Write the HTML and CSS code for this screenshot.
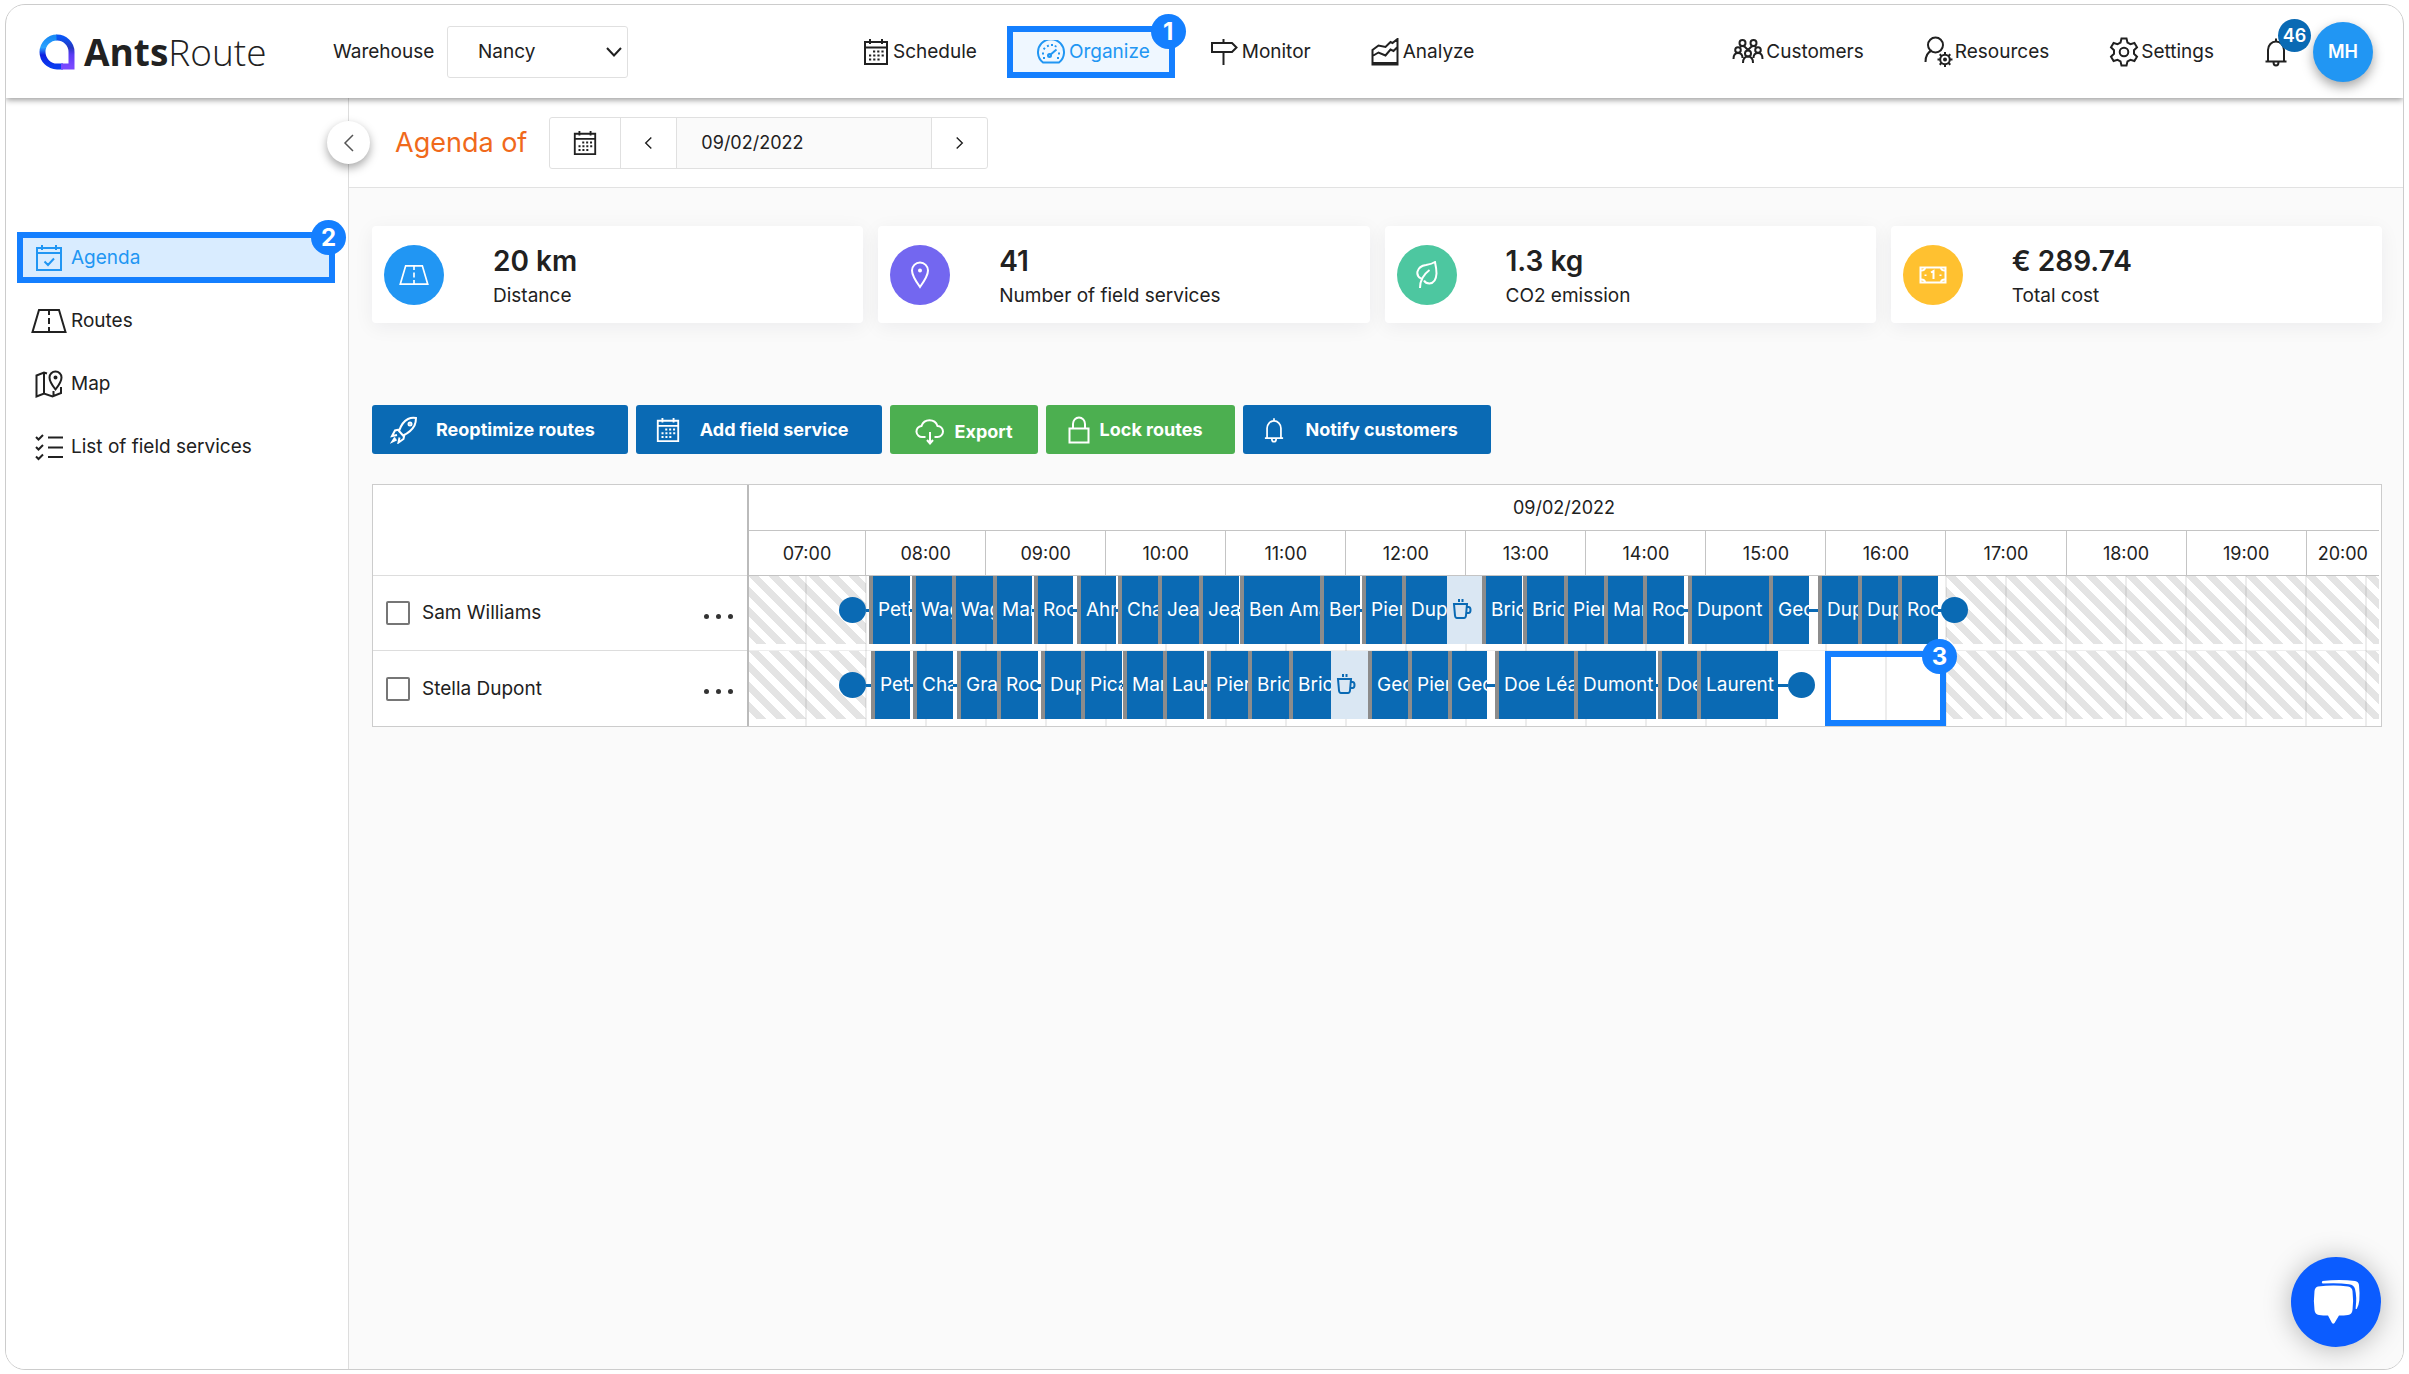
FILE: index.html
```
<!DOCTYPE html>
<html lang="en">
<head>
  <meta charset="UTF-8" />
  <title>AntsRoute - Agenda</title>
  <meta name="viewport" content="width=device-width, initial-scale=1.0" />
  <link rel="stylesheet" href="styles.css">
</head>
<body>
  <!-- Shared icons -->
  <svg class="sprite" aria-hidden="true">
    <symbol id="i-calendar" viewBox="0 0 26 28">
      <path d="M2 4h22v22H2zM2 9.500h22M7 1v5M19 1v5" />
      <path d="M10 13.500h12M6 17.500h16M6 21.500h12" stroke-dasharray="2.200 2" stroke-width="2.200" />
    </symbol>
    <symbol id="i-road" viewBox="0 0 36 26">
      <path d="M8 2h20l6.500 22h-33zM18 2v5M18 10v6M18 19v5" />
    </symbol>
    <symbol id="i-bell" viewBox="0 0 24 30">
      <path d="M1.500 24.500h21M4 24.500V13a8 8.500 0 0 1 16 0v11.500M12 4.500V1.500M9.500 25a2.500 3.500 0 0 0 5 0" />
    </symbol>
    <symbol id="i-left" viewBox="0 0 12 20"><path d="M10 2L2 10l8 8" /></symbol>
    <symbol id="i-right" viewBox="0 0 12 20"><path d="M2 2l8 8-8 8" /></symbol>
    <symbol id="i-cup" viewBox="0 0 20 22">
      <path d="M2 6h13l-1 11.500q-.3 2.500-2 2.500H5q-1.700 0-2-2.500zM15 9h1.500q2 0 2 3t-2 3H14.500M7 1v3M10.500 1v3" />
    </symbol>
  </svg>

  <div class="app">
    <header class="topbar">
      <a class="logo" href="#">
        <svg width="36" height="36" viewBox="0 0 36 36">
          <defs>
            <linearGradient id="lg-left" x1="0" y1="0" x2="0" y2="1">
              <stop offset="0" stop-color="#1a8cf5" /><stop offset=".35" stop-color="#2ba3ff" /><stop offset=".6" stop-color="#0d1fe0" /><stop offset="1" stop-color="#0a3cf0" />
            </linearGradient>
            <linearGradient id="lg-right" x1="0" y1="0" x2="0" y2="1">
              <stop offset="0" stop-color="#0b55f5" /><stop offset=".35" stop-color="#2436c0" /><stop offset=".6" stop-color="#5b3cf5" /><stop offset="1" stop-color="#7a48ff" />
            </linearGradient>
          </defs>
          <path d="M18 3.500A14.500 14.500 0 0 0 18 32.500H24" fill="none" stroke="url(#lg-left)" stroke-width="6" />
          <path d="M17.500 3.500A14.500 14.500 0 0 1 32.500 18V32.500H22" fill="none" stroke="url(#lg-right)" stroke-width="6" />
        </svg>
        <span class="logo-text"><b>Ants</b>Route</span>
      </a>

      <label class="warehouse-label" for="warehouse">Warehouse</label>
      <div class="select-wrap">
        <select id="warehouse"><option>Nancy</option></select>
        <svg class="icon" width="16" height="10" viewBox="0 0 16 10"><path d="M1 1l7 7.500L15 1" /></svg>
      </div>

      <nav class="main-nav">
        <a href="#"><svg class="icon" width="26" height="28"><use href="#i-calendar" /></svg>Schedule</a>
        <a href="#" class="active">
          <svg class="icon" width="28" height="24" viewBox="0 0 28 24">
            <path d="M6 22.500a13 13 0 1 1 16 0zM12.500 15.500l7-6" />
            <circle cx="12.500" cy="15.500" r="1.500" />
            <path d="M5 13.500h2M6.500 8l1.500 1.300M10.500 5l.8 1.800M15 4v2M19 5.500l-.8 1.500M21 13.500h2M6 18h2M20 18h2" />
          </svg>Organize
          <span class="step">1</span>
        </a>
        <a href="#">
          <svg class="icon" width="28" height="26" viewBox="0 0 28 26"><path d="M2 4h20l4.500 4.500L22 13H2zM13.500 0v4M13.500 13v13" /></svg>Monitor
        </a>
        <a href="#">
          <svg class="icon" width="28" height="28" viewBox="0 0 28 28"><path d="M1.500 26.500V12l6-4.500 7 1.500 5-5 2 1L26.500 1v25.500zM1.500 18l6-3.500 7 3 5-6 3 1.500 4-4M1 25h26" /></svg>Analyze
        </a>
      </nav>

      <nav class="user-nav">
        <a href="#">
          <svg class="icon" width="32" height="26" viewBox="0 0 32 26">
            <circle cx="10.500" cy="4" r="3" /><circle cx="21.500" cy="4" r="3" />
            <circle cx="6" cy="11" r="2.800" /><circle cx="26" cy="11" r="2.800" /><circle cx="16" cy="14.500" r="3" />
            <path d="M1.500 20q0-6 4.500-6t4.500 5M30.500 20q0-6-4.500-6t-4.500 5M11 24q0-6.500 5-6.500t5 6.500M8 8q2.500-2 5 0l3 3 3-3q2.500-2 5 0" />
          </svg>Customers
        </a>
        <a href="#">
          <svg class="icon" width="29" height="32" viewBox="0 0 29 32">
            <circle cx="11.500" cy="9" r="7.500" />
            <path d="M1.500 26q0-9 6.500-11.500" />
            <circle cx="21" cy="23.500" r="4.800" /><circle cx="21" cy="23.500" r="1" />
            <path d="M21 16v2.500M21 28.500V31M13.500 23.500H16M26 23.500h2.500M15.700 18.200l1.800 1.800M24.500 27l1.800 1.800M26.300 18.200L24.500 20M17.500 27l-1.800 1.800" />
          </svg>Resources
        </a>
        <a href="#">
          <svg class="icon" width="30" height="30" viewBox="0 0 30 30">
            <circle cx="15" cy="15" r="4.300" />
            <path d="M12.500 1.500h5l1 4 3 1.700 3.900-1.200 2.600 4.300-3 2.900v3.600l3 2.900-2.600 4.300-3.900-1.200-3 1.700-1 4h-5l-1-4-3-1.700L4.600 24 2 19.700l3-2.900v-3.600l-3-2.900L4.600 6l3.900 1.200 3-1.700z" />
          </svg>Settings
        </a>
        <button class="bell" aria-label="Notifications">
          <svg class="icon" width="24" height="30"><use href="#i-bell" /></svg>
          <span class="count">46</span>
        </button>
        <button class="avatar">MH</button>
      </nav>
    </header>

    <div class="layout">
      <aside class="sidebar">
        <button class="collapse" aria-label="Collapse menu"><svg class="icon thin" width="12" height="20"><use href="#i-left" /></svg></button>
        <a href="#" class="side-link active">
          <svg class="icon" width="36" height="28" viewBox="0 0 36 28"><path d="M6 4h24v22H6zM6 9h24M11 1v5M25 1v5M13.500 17.500l3.500 3.500 6-6.500" /></svg>Agenda
          <span class="step">2</span>
        </a>
        <a href="#" class="side-link"><svg class="icon" width="36" height="26"><use href="#i-road" /></svg>Routes</a>
        <a href="#" class="side-link">
          <svg class="icon" width="36" height="28" viewBox="0 0 36 28">
            <path d="M16 3.500L13 2.500 5.500 5.500V26.500L13 23.500l8.500 3 8.500-3.500V17M13 2.500v21M22.500 21v5" />
            <path d="M24.500 19.500Q18.500 12 18.500 7.500a6 6 0 0 1 12 0q0 4.500-6 12z" /><circle cx="24.500" cy="7.500" r="1" />
          </svg>Map
        </a>
        <a href="#" class="side-link">
          <svg class="icon" width="36" height="28" viewBox="0 0 36 28"><path d="M17 4.500h15M17 14.500h15M17 24h15M5 4l2.500 2.500L12 2M5 14l2.500 2.500L12 12M5 23.500L7.500 26 12 21.500" /></svg>List of field services
        </a>
      </aside>

      <main class="content">
        <div class="page-head">
          <h1>Agenda of</h1>
          <div class="date-picker">
            <button class="cal" aria-label="Open calendar"><svg class="icon" width="26" height="26"><use href="#i-calendar" /></svg></button>
            <button aria-label="Previous day"><svg class="icon" width="9" height="14"><use href="#i-left" /></svg></button>
            <input type="text" value="09/02/2022" aria-label="Date">
            <button aria-label="Next day"><svg class="icon" width="9" height="14"><use href="#i-right" /></svg></button>
          </div>
        </div>

        <div class="page-body">
          <!-- Key figures -->
          <section class="stats">
            <div class="stat">
              <span class="stat-icon blue"><svg class="icon" width="30" height="22"><use href="#i-road" /></svg></span>
              <div><strong>20 km</strong><span>Distance</span></div>
            </div>
            <div class="stat">
              <span class="stat-icon purple"><svg class="icon" width="20" height="28" viewBox="0 0 20 28"><path d="M10 26Q2 15 2 9.500a8 8 0 0 1 16 0Q18 15 10 26z" /><circle cx="10" cy="9.500" r="1" /></svg></span>
              <div><strong>41</strong><span>Number of field services</span></div>
            </div>
            <div class="stat">
              <span class="stat-icon green"><svg class="icon" width="24" height="28" viewBox="0 0 24 28"><path d="M6 17.500Q1.500 15 2.500 10.500 4 5 11 4 17 3 20 1q1.500 7 1.500 11.500Q21 22 14.500 22.500q-4 0-5.500-3M5 27q0-11 9.500-18" /></svg></span>
              <div><strong>1.3 kg</strong><span>CO2 emission</span></div>
            </div>
            <div class="stat">
              <span class="stat-icon yellow"><svg class="icon" width="28" height="18" viewBox="0 0 28 18"><path d="M1.500 1.500h25v15h-25z" /><path d="M6 1.500q0 3-4 3M22 1.500q0 3 4 3M6 16.500q0-3-4-3M22 16.500q0-3 4-3M12 6.500L14.500 5v8M6.500 8.500v1.500M21.500 8.500v1.500" /></svg></span>
              <div><strong>€ 289.74</strong><span>Total cost</span></div>
            </div>
          </section>

          <div class="actions">
            <button class="btn">
              <svg class="icon" width="28" height="28" viewBox="0 0 28 28"><path d="M9 15Q12 6 18 3q4-2 8-1 0 4-1.500 7.500Q21 16 13 19.500zM9.500 13.500l-4.500 1-3 5.500 5-1M14.500 18.500l-1 4.500-5 3.500 1-5M5 21.500l-2.500 4 4-2" /><circle cx="20" cy="8" r="1.500" /></svg>
              Reoptimize routes
            </button>
            <button class="btn">
              <svg class="icon" width="28" height="26"><use href="#i-calendar" /></svg>
              Add field service
            </button>
            <button class="btn green tight low">
              <svg class="icon" width="30" height="26" viewBox="0 0 30 26"><path d="M10.500 18H7.500a5.500 5.500 0 0 1-1-11A8.500 8.500 0 0 1 22.500 7 5.500 5.500 0 0 1 22.500 18H19.500M15 13v11M12 21l3 3.500 3-3.500" /></svg>
              Export
            </button>
            <button class="btn green tight">
              <svg class="icon" width="22" height="28" viewBox="0 0 22 28"><path d="M1.500 12.500h19v14h-19zM5 12.500V8a6 6.500 0 0 1 12 0v4.500" /></svg>
              Lock routes
            </button>
            <button class="btn">
              <svg class="icon" width="26" height="26"><use href="#i-bell" /></svg>
              Notify customers
            </button>
          </div>

          <!-- Agenda: one unit of --w is half a minute -->
          <section class="agenda">
            <div class="people">
              <div class="people-head"></div>
              <div class="person">
                <input type="checkbox" id="sam"><label for="sam">Sam Williams</label>
                <button class="more" aria-label="More"><i></i><i></i><i></i></button>
              </div>
              <div class="person">
                <input type="checkbox" id="stella"><label for="stella">Stella Dupont</label>
                <button class="more" aria-label="More"><i></i><i></i><i></i></button>
              </div>
            </div>

            <div class="timeline">
              <div class="day">09/02/2022</div>
              <div class="hours">
                <span class="first">07:00</span><span>08:00</span><span>09:00</span><span>10:00</span><span>11:00</span><span>12:00</span><span>13:00</span><span>14:00</span><span>15:00</span><span>16:00</span><span>17:00</span><span>18:00</span><span>19:00</span><span class="last">20:00</span>
              </div>
              <div class="tracks">
                <div class="track">
                  <div class="closed start" style="--w:117"><i class="dot"></i></div>
                  <div class="gap" style="--w:3"></div>
                  <div class="job" style="--w:41">Petit</div>
                  <div class="gap" style="--w:2"></div>
                  <div class="job" style="--w:40">Wagner</div>
                  <div class="job" style="--w:41">Wagner</div>
                  <div class="job" style="--w:39">Martin</div>
                  <div class="gap" style="--w:2"></div>
                  <div class="job" style="--w:39">Roche</div>
                  <div class="gap" style="--w:4"></div>
                  <div class="job" style="--w:39">Ahmed</div>
                  <div class="gap" style="--w:2"></div>
                  <div class="job" style="--w:40">Charles</div>
                  <div class="job" style="--w:41">Jean</div>
                  <div class="job" style="--w:40">Jean</div>
                  <div class="gap" style="--w:1"></div>
                  <div class="job" style="--w:80">Ben Amar</div>
                  <div class="job" style="--w:40">Benoit</div>
                  <div class="gap" style="--w:2"></div>
                  <div class="job" style="--w:40">Pierre</div>
                  <div class="job" style="--w:45">Dupont</div>
                  <div class="break" style="--w:35"><svg class="icon" width="20" height="22"><use href="#i-cup" /></svg></div>
                  <div class="job" style="--w:40">Brice</div>
                  <div class="gap" style="--w:1"></div>
                  <div class="job" style="--w:41">Brice</div>
                  <div class="job" style="--w:40">Pierre</div>
                  <div class="job" style="--w:39">Martin</div>
                  <div class="job" style="--w:41">Roche</div>
                  <div class="gap" style="--w:4"></div>
                  <div class="job" style="--w:81">Dupont</div>
                  <div class="job" style="--w:40">George</div>
                  <div class="gap" style="--w:9"></div>
                  <div class="job" style="--w:40">Dupont</div>
                  <div class="job" style="--w:40">Dupont</div>
                  <div class="job" style="--w:40">Roche</div>
                  <div class="gap" style="--w:8"></div>
                  <div class="closed end" style="--w:433"><i class="dot"></i></div>
                </div>
                <div class="track">
                  <div class="closed start" style="--w:117"><i class="dot"></i></div>
                  <div class="gap" style="--w:5"></div>
                  <div class="job" style="--w:39">Petit</div>
                  <div class="gap" style="--w:3"></div>
                  <div class="job" style="--w:40">Charles</div>
                  <div class="gap" style="--w:4"></div>
                  <div class="job" style="--w:40">Grand</div>
                  <div class="job" style="--w:41">Roche</div>
                  <div class="gap" style="--w:3"></div>
                  <div class="job" style="--w:40">Dupont</div>
                  <div class="job" style="--w:41">Picard</div>
                  <div class="gap" style="--w:1"></div>
                  <div class="job" style="--w:40">Martin</div>
                  <div class="job" style="--w:41">Laurent</div>
                  <div class="gap" style="--w:3"></div>
                  <div class="job" style="--w:41">Pierre</div>
                  <div class="job" style="--w:41">Brice</div>
                  <div class="job" style="--w:42">Brice</div>
                  <div class="break" style="--w:37"><svg class="icon" width="20" height="22"><use href="#i-cup" /></svg></div>
                  <div class="job" style="--w:40">George</div>
                  <div class="job" style="--w:40">Pierre</div>
                  <div class="job" style="--w:39">George</div>
                  <div class="gap" style="--w:8"></div>
                  <div class="job" style="--w:79">Doe Léa</div>
                  <div class="job" style="--w:82">Dumont</div>
                  <div class="gap" style="--w:2"></div>
                  <div class="job" style="--w:39">Doe L</div>
                  <div class="job" style="--w:81">Laurent</div>
                  <div class="gap" style="--w:10"></div>
                  <div class="free" style="--w:37"><i class="dot"></i></div>
                  <div class="slot" style="--w:121"><span class="step">3</span></div>
                  <div class="closed" style="--w:433"></div>
                </div>
              </div>
            </div>
          </section>
        </div>
      </main>
    </div>

    <button class="chat" aria-label="Open chat">
      <svg width="48" height="46" viewBox="0 0 48 46" fill="#fff">
        <path d="M6 7.500Q22 5.500 36 7.500q4 .5 4.500 4.500 1.200 10 0 19-.5 4.500-4.500 5-4 .5-9 .6L22.500 44q-1.300 1.500-2.500 0l-4-7.400q-5 0-9-.6-4-.5-4.500-5-1.200-9 0-19Q3 8 6 7.500z" />
        <path d="M10.500 2Q28 0 43 2q3.500.5 4 4 1 9 .300 15.500-.6 5.500-2.600 8.500-1.500.5-1-1.500Q45 18 43 10 42 6 37 5.200 26 3.500 10.500 4.500q-1.500-1.500 0-2.500z" />
      </svg>
    </button>
  </div>
</body>
</html>
```

FILE: styles.css
```
* {
  box-sizing: border-box;
}
body {
  margin: 0;
  padding: 4px 5px;
  font-family: Inter, "Open Sans", sans-serif;
  font-size: 19px;
  line-height: 24px;
  color: #212121;
  background: #fff;
}
a {
  color: inherit;
  text-decoration: none;
}
button,
input,
select {
  font: inherit;
  color: inherit;
}
button {
  display: flex;
  align-items: center;
  justify-content: center;
  padding: 0;
  border: none;
  background: none;
}
.sprite {
  display: none;
}
.icon {
  flex: none;
  fill: none;
  stroke: currentColor;
  stroke-width: 2;
}
.icon.thin {
  stroke-width: 1.5;
}
.app {
  position: relative;
  display: flex;
  flex-direction: column;
  min-height: calc(100vh - 8px);
  border: 1px solid #ccc;
  border-radius: 20px;
  overflow: hidden;
}

/* Top bar */
.topbar {
  position: relative;
  z-index: 3;
  display: flex;
  align-items: center;
  height: 93px;
  padding: 0 30px 0 33px;
  background: #fff;
  box-shadow: 0 2px 6px rgba(0, 0, 0, 0.4);
}
.logo {
  display: flex;
  align-items: center;
  gap: 9px;
  width: 294px;
}
.logo-text {
  font-family: "Open Sans", sans-serif;
  font-size: 37px;
  font-weight: 300;
  line-height: 40px;
}
.logo-text b {
  font-weight: 700;
}
.warehouse-label {
  width: 114px;
}
.select-wrap {
  display: flex;
  align-items: center;
}
.select-wrap select {
  appearance: none;
  width: 181px;
  height: 52px;
  padding: 0 30px;
  border: 1px solid #e0e0e0;
  border-radius: 3px;
  background: #fff;
}
.select-wrap .icon {
  margin-left: -22px;
  margin-right: 6px;
  pointer-events: none;
}
.main-nav {
  display: flex;
  align-items: center;
  margin-left: 205px;
}
.main-nav a,
.user-nav a {
  display: flex;
  align-items: center;
  gap: 4px;
  height: 52px;
  padding: 0 30px;
}
.main-nav .active {
  position: relative;
  margin-right: 5px;
  padding: 0 19px 0 24px;
  border: 6px solid #147fff;
  background: #eff7ff;
  color: #2196f3;
}
.step {
  position: absolute;
  top: -18px;
  right: -17px;
  z-index: 4;
  width: 35px;
  height: 35px;
  border-radius: 50%;
  background: #147fff;
  color: #fff;
  font-size: 24px;
  font-weight: 700;
  line-height: 35px;
  text-align: center;
}
.user-nav {
  display: flex;
  align-items: center;
  margin-left: auto;
}
.user-nav a {
  gap: 2px;
}
.bell {
  position: relative;
  margin: 0 25px 0 20px;
}
.count {
  position: absolute;
  top: -18px;
  left: 14px;
  width: 33px;
  height: 33px;
  border-radius: 50%;
  background: #0a6ab4;
  color: #fff;
  font-size: 18px;
  font-weight: 600;
  line-height: 33px;
}
.avatar {
  width: 60px;
  height: 60px;
  border-radius: 50%;
  background: #2196f3;
  box-shadow: 0 5px 12px rgba(0, 0, 0, 0.35);
  color: #fff;
  font-size: 18px;
  font-weight: 600;
}

/* Side menu */
.layout {
  flex: 1;
  display: flex;
}
.sidebar {
  position: relative;
  flex: none;
  width: 343px;
  padding: 134px 13px 0 11px;
  border-right: 1px solid #ddd;
  background: #fff;
}
.collapse {
  position: absolute;
  top: 23px;
  right: -22px;
  z-index: 2;
  width: 43px;
  height: 43px;
  border-radius: 50%;
  background: #fff;
  box-shadow: 0 4px 10px rgba(0, 0, 0, 0.35);
  color: #555;
}
.side-link {
  position: relative;
  display: flex;
  align-items: center;
  gap: 4px;
  height: 51px;
  margin-bottom: 12px;
  padding: 0 14px;
}
.side-link.active {
  padding: 0 8px;
  border: 6px solid #147fff;
  background: #d9ecff;
  color: #2196f3;
}

/* Page */
.content {
  flex: 1;
  min-width: 0;
  background: #fafafa;
}
.page-head {
  display: flex;
  align-items: center;
  gap: 22px;
  height: 90px;
  padding-left: 46px;
  border-bottom: 1px solid #e2e2e2;
  background: #fff;
}
h1 {
  margin: 0;
  color: #f0691b;
  font-size: 27px;
  font-weight: 400;
}
.date-picker {
  display: flex;
  height: 52px;
  border: 1px solid #e0e0e0;
  border-radius: 3px;
}
.date-picker button {
  width: 55px;
}
.date-picker .cal {
  width: 71px;
  border-right: 1px solid #e0e0e0;
}
.date-picker input {
  width: 256px;
  padding: 0 24px;
  border: 1px solid #e0e0e0;
  border-width: 0 1px;
  background: #fafafa;
  font-size: 18px;
}
.page-body {
  padding: 38px 21px 38px 23px;
}
.stats {
  display: grid;
  grid-template-columns: repeat(4, 1fr);
  gap: 15px;
}
.stat {
  display: flex;
  align-items: center;
  gap: 49px;
  height: 97px;
  padding: 0 12px;
  border-radius: 4px;
  background: #fff;
  box-shadow: 0 4px 20px rgba(0, 0, 50, 0.06);
}
.stat div {
  padding-top: 5px;
}
.stat strong,
.stat div span {
  display: block;
}
.stat strong {
  margin-bottom: 9px;
  font-size: 28px;
  font-weight: 600;
  line-height: 28px;
}
.stat-icon {
  display: flex;
  align-items: center;
  justify-content: center;
  width: 60px;
  height: 60px;
  border-radius: 50%;
  color: #fff;
}
.blue { background: #2196f3; }
.purple { background: #7367f0; }
.green { background: #4dc7a0; }
.yellow { background: #ffc130; }

.actions {
  display: flex;
  gap: 8px;
  margin: 82px 0 30px;
}
.btn {
  gap: 18px;
  height: 49px;
  padding: 0 33px 0 18px;
  border-radius: 3px;
  background: #0a6ab4;
  color: #fff;
  font-size: 18px;
  font-weight: 700;
}
.btn.green {
  background: #4caf50;
}
.btn.tight {
  gap: 10px;
  padding: 0 33px 0 22px;
}
.btn.low {
  padding: 4px 25px 0;
}

/* Agenda */
.agenda {
  display: flex;
  border: 1px solid #ccc;
  background: #fff;
}
.people {
  flex: none;
  width: 376px;
  border-right: 2px solid #bbb;
}
.people-head {
  height: 91px;
  border-bottom: 1px solid #ddd;
}
.person {
  display: flex;
  align-items: center;
  height: 75px;
  padding: 0 13px;
}
.person:nth-child(2) {
  border-bottom: 1px solid #ddd;
}
.person input {
  appearance: none;
  width: 24px;
  height: 24px;
  margin: 0 12px 0 0;
  border: 2px solid #767676;
  border-radius: 2px;
}
.more {
  gap: 7px;
  width: 32px;
  height: 32px;
  margin-left: auto;
  padding-top: 6px;
}
.more i {
  width: 5px;
  height: 5px;
  border-radius: 50%;
  background: #333;
}
.timeline {
  flex: 1;
  min-width: 0;
  padding-right: 2px;
  font-size: 18px;
  text-align: center;
}
.day {
  height: 46px;
  border-bottom: 1px solid #c4c4c4;
  line-height: 46px;
}
.hours {
  display: flex;
  height: 45px;
  border-bottom: 1px solid #c4c4c4;
  line-height: 46px;
}
.hours span {
  flex: 120 1 0;
  border-right: 1px solid #c4c4c4;
}
.hours .first {
  flex-grow: 117;
}
.hours .last {
  flex-grow: 73;
  border-right: none;
}
.tracks {
  position: relative;
}
/* half-hour lines, the first one 56 units in */
.tracks::before {
  content: "";
  position: absolute;
  inset: 0 0 0 calc(100% * 56 / 1630);
  z-index: 1;
  background-image: linear-gradient(90deg, rgba(0, 0, 0, 0.07) 2px, transparent 2px);
  background-size: calc(100% * 60 / 1574) 100%;
}
.track {
  display: flex;
  align-items: flex-start;
  height: 75px;
}
.track:first-child {
  border-bottom: 1px solid #eee;
}
.track > div {
  position: relative;
  flex: none;
  width: calc(100% * var(--w) / 1630);
  height: 68px;
}
.closed {
  background-image: linear-gradient(45deg, #e4e4e4 25%, transparent 25%, transparent 50%, #e4e4e4 50%, #e4e4e4 75%, transparent 75%);
  background-size: 20px 20px;
}
.dot {
  position: absolute;
  top: 21px;
  left: 0;
  z-index: 3;
  width: 27px;
  height: 26px;
  border-radius: 50%;
  background: #0a6ab4;
}
.start .dot {
  left: auto;
  right: 0;
}
.end .dot {
  left: -5px;
}
.gap {
  z-index: 3;
  background: linear-gradient(#0a6ab4, #0a6ab4) center / 100% 3px no-repeat;
}
.job {
  z-index: 2;
  padding-left: 5px;
  border-left: 4px solid #8c8c8c;
  background: #0a6ab4;
  color: #fff;
  font-size: 19px;
  line-height: 68px;
  text-align: left;
  white-space: nowrap;
  overflow: hidden;
}
.break {
  z-index: 2;
  padding: 22px 0 0 5px;
  background: #dae7f3;
  color: #0a6ab4;
  text-align: left;
  line-height: 0;
}
.track > .slot {
  height: 75px;
  z-index: 4;
  border: 6px solid #147fff;
}

.chat {
  position: absolute;
  right: 22px;
  bottom: 22px;
  width: 90px;
  height: 90px;
  border-radius: 50%;
  background: #0b5cff;
  box-shadow: 0 2px 28px rgba(0, 0, 0, 0.28);
}
```
